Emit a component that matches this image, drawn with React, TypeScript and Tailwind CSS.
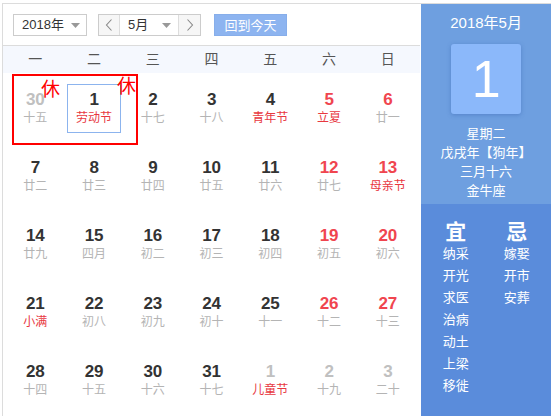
import React from "react";

type Day = { n: number; sub: string; kind?: "other" | "weekend"; subRed?: boolean };

const weeks: Day[][] = [
  [
    { n: 30, sub: "十五", kind: "other" },
    { n: 1, sub: "劳动节", subRed: true },
    { n: 2, sub: "十七" },
    { n: 3, sub: "十八" },
    { n: 4, sub: "青年节", subRed: true },
    { n: 5, sub: "立夏", kind: "weekend", subRed: true },
    { n: 6, sub: "廿一", kind: "weekend" },
  ],
  [
    { n: 7, sub: "廿二" },
    { n: 8, sub: "廿三" },
    { n: 9, sub: "廿四" },
    { n: 10, sub: "廿五" },
    { n: 11, sub: "廿六" },
    { n: 12, sub: "廿七", kind: "weekend" },
    { n: 13, sub: "母亲节", kind: "weekend", subRed: true },
  ],
  [
    { n: 14, sub: "廿九" },
    { n: 15, sub: "四月" },
    { n: 16, sub: "初二" },
    { n: 17, sub: "初三" },
    { n: 18, sub: "初四" },
    { n: 19, sub: "初五", kind: "weekend" },
    { n: 20, sub: "初六", kind: "weekend" },
  ],
  [
    { n: 21, sub: "小满", subRed: true },
    { n: 22, sub: "初八" },
    { n: 23, sub: "初九" },
    { n: 24, sub: "初十" },
    { n: 25, sub: "十一" },
    { n: 26, sub: "十二", kind: "weekend" },
    { n: 27, sub: "十三", kind: "weekend" },
  ],
  [
    { n: 28, sub: "十四" },
    { n: 29, sub: "十五" },
    { n: 30, sub: "十六" },
    { n: 31, sub: "十七" },
    { n: 1, sub: "儿童节", kind: "other", subRed: true },
    { n: 2, sub: "十九", kind: "other" },
    { n: 3, sub: "二十", kind: "other" },
  ],
];

const weekdays = ["一", "二", "三", "四", "五", "六", "日"];
const yi = ["纳采", "开光", "求医", "治病", "动土", "上梁", "移徙"];
const ji = ["嫁娶", "开市", "安葬"];

const cjk = "font-['Liberation_Sans','Noto_Sans_CJK_SC',sans-serif]";

const Caret = () => (
  <svg width="9" height="5" viewBox="0 0 9 5" className="shrink-0">
    <path d="M0 0h9L4.5 5z" fill="#999" />
  </svg>
);

const Chevron = ({ dir }: { dir: "l" | "r" }) => (
  <svg width="8" height="12" viewBox="0 0 8 12">
    <path
      d={dir === "l" ? "M6.5 0.5L1.5 6l5 5.5" : "M1.5 0.5L6.5 6l-5 5.5"}
      stroke="#888"
      strokeWidth="1.1"
      fill="none"
    />
  </svg>
);

const App = () => {
  return (
    <div className={`w-[551px] h-[416px] overflow-hidden bg-white pt-[3px] pl-[2px] ${cjk}`}>
      <div className="flex h-full border-t border-l border-[#dcdcdc]">
        {/* Calendar */}
        <div className="w-[418px] flex flex-col">
          {/* Toolbar */}
          <div className="h-[42px] border-b border-[#dcdcdc] flex items-start pt-[10px] pl-[10px] text-[13px] text-[#333]">
            <div className="w-[74px] h-[22px] border border-[#ccc] flex items-center justify-between pl-[8px] pr-[6px]">
              <span>2018年</span>
              <Caret />
            </div>
            <div className="ml-[11px] h-[22px] flex border border-[#ccc]">
              <div className="w-[21px] bg-[#f6f6f6] border-r border-[#ddd] flex items-center justify-center">
                <Chevron dir="l" />
              </div>
              <div className="w-[58px] flex items-center justify-between pl-[8px] pr-[7px]">
                <span>5月</span>
                <Caret />
              </div>
              <div className="w-[22px] bg-[#f6f6f6] border-l border-[#ddd] flex items-center justify-center">
                <Chevron dir="r" />
              </div>
            </div>
            <button className="ml-[13px] w-[73px] h-[22px] bg-[#8db4f0] border border-[#87aeea] text-white text-[13px] leading-none">
              回到今天
            </button>
          </div>

          {/* Weekday header */}
          <div className="h-[27px] bg-[#f5f8fe] grid grid-cols-7 px-[3px] items-center text-[14px] text-[#555]">
            {weekdays.map((w) => (
              <div key={w} className="text-center">
                {w}
              </div>
            ))}
          </div>

          {/* Days */}
          <div className="relative px-[3px]">
            {weeks.map((row, ri) => (
              <div key={ri} className="grid grid-cols-7 h-[68px]">
                {row.map((d, ci) => {
                  const numColor =
                    d.kind === "other"
                      ? "text-[#c0c0c0]"
                      : d.kind === "weekend"
                      ? "text-[#f0454f]"
                      : "text-[#333]";
                  const isToday = ri === 0 && ci === 1;
                  return (
                    <div key={ci} className="relative flex flex-col items-center pt-[17px]">
                      {isToday && (
                        <div className="absolute left-[2px] top-[11px] w-[54px] h-[49px] border border-[#8cb4ee]" />
                      )}
                      <div
                        className={`relative font-['Liberation_Sans',sans-serif] font-bold text-[17px] leading-[20px] ${numColor}`}
                      >
                        {d.n}
                      </div>
                      <div
                        className={`relative text-[12px] leading-[16px] ${
                          d.subRed ? "text-[#e8383f]" : "text-[#b4b4b4]"
                        }`}
                      >
                        {d.sub}
                      </div>
                    </div>
                  );
                })}
              </div>
            ))}

            {/* Holiday block */}
            <div className="absolute left-[9px] top-[1px] w-[126px] h-[71px] border-2 border-[#ff0000]" />
            <span className="absolute left-[38px] top-[6px] text-[19px] leading-[22px] text-[#ff0000]">休</span>
            <span className="absolute left-[114px] top-[3px] text-[19px] leading-[22px] text-[#ff0000]">休</span>
          </div>
        </div>

        {/* Side panel */}
        <div className="w-[130px] ml-[1px] flex flex-col text-white">
          <div className="h-[200px] bg-[#6e9fe0] flex flex-col items-center">
            <div className="mt-[10px] text-[15px] leading-[18px]">2018年5月</div>
            <div className="mt-[12px] w-[70px] h-[70px] rounded-[3px] bg-[#8bb8fa] shadow-[0_1px_4px_rgba(40,80,160,0.35)] flex items-center justify-center">
              <span className="font-['Liberation_Sans',sans-serif] text-[52px] leading-none">1</span>
            </div>
            <div className="mt-[10px] flex flex-col items-center text-[13px] leading-[19px]">
              <span>星期二</span>
              <span>戊戌年【狗年】</span>
              <span>三月十六</span>
              <span>金牛座</span>
            </div>
          </div>
          <div className="flex-1 bg-[#5a8cdb] flex pt-[16px] pl-[4px]">
            <div className="w-[61px] flex flex-col items-center">
              <span className="text-[21px] leading-[24px] font-bold">宜</span>
              <div className="flex flex-col items-center text-[13px] leading-[22px] -mt-[1px]">
                {yi.map((t) => (
                  <span key={t}>{t}</span>
                ))}
              </div>
            </div>
            <div className="w-[61px] flex flex-col items-center">
              <span className="text-[21px] leading-[24px] font-bold">忌</span>
              <div className="flex flex-col items-center text-[13px] leading-[22px] -mt-[1px]">
                {ji.map((t) => (
                  <span key={t}>{t}</span>
                ))}
              </div>
            </div>
          </div>
        </div>
      </div>
    </div>
  );
};

export default App;
